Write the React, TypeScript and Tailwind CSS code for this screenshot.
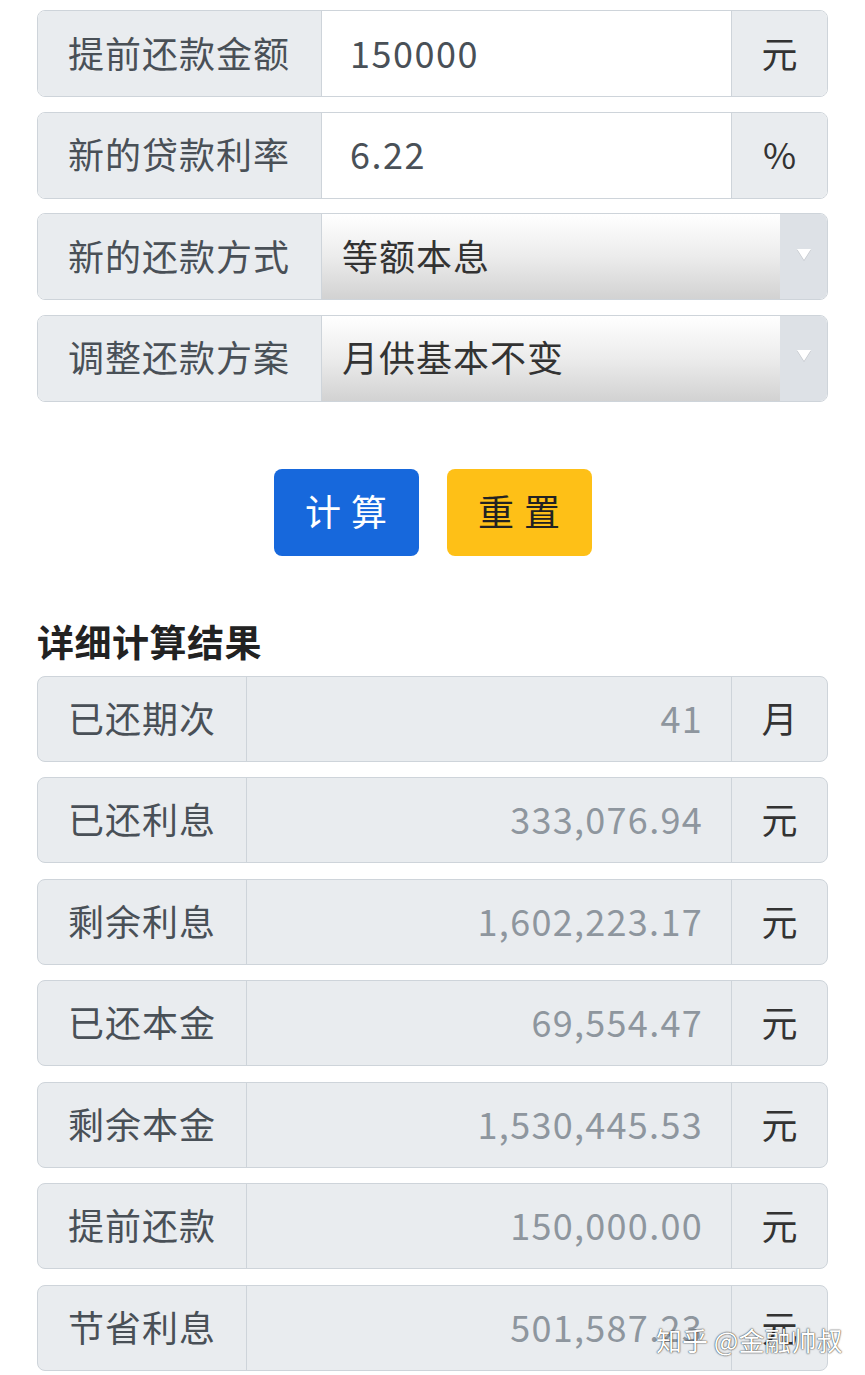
import React from "react";

const font = { fontFamily: '"Noto Sans CJK SC", "Noto Sans", sans-serif' };

function InputRow({ label, value, unit }: { label: string; value: string; unit: string }) {
  return (
    <div className="flex h-[87px] rounded-[8px] border border-[#ced4da] overflow-hidden">
      <div className="w-[284px] shrink-0 bg-[#e9ecef] border-r border-[#ced4da] flex items-center pl-[30px] pb-[4px] text-[36px] tracking-[1px] text-[#495057]">
        {label}
      </div>
      <div className="flex-1 bg-white flex items-center pl-[28px] pb-[4px] text-[36px] tracking-[1.5px] text-[#495057]">{value}</div>
      <div className="w-[96px] shrink-0 bg-[#e9ecef] border-l border-[#ced4da] flex items-center justify-center pb-[4px] text-[36px] text-[#333]">
        {unit}
      </div>
    </div>
  );
}

function SelectRow({ label, value }: { label: string; value: string }) {
  return (
    <div className="flex h-[87px] rounded-[8px] border border-[#ced4da] overflow-hidden">
      <div className="w-[284px] shrink-0 bg-[#e9ecef] border-r border-[#ced4da] flex items-center pl-[30px] pb-[4px] text-[36px] tracking-[1px] text-[#495057]">
        {label}
      </div>
      <div className="flex-1 bg-gradient-to-b from-white via-[#ececec] to-[#d2d2d2] flex items-center pl-[20px] pb-[4px] text-[36px] tracking-[1px] text-[#333]">
        {value}
      </div>
      <div className="w-[47px] shrink-0 bg-[#dde1e6] flex items-center justify-center pb-[4px]">
        <svg width="16" height="14" viewBox="0 0 16 14">
          <polygon points="1,2 15,2 8,13" fill="#bfc3c8" />
          <polygon points="1,1 15,1 8,12" fill="#ffffff" />
        </svg>
      </div>
    </div>
  );
}

function ResultRow({ label, value, unit }: { label: string; value: string; unit: string }) {
  return (
    <div className="flex h-[86px] rounded-[8px] border border-[#ced4da] overflow-hidden bg-[#e9ecef]">
      <div className="w-[209px] shrink-0 border-r border-[#ced4da] flex items-center pl-[30px] pb-[4px] text-[36px] tracking-[1px] text-[#495057]">
        {label}
      </div>
      <div className="flex-1 flex items-center justify-end pr-[28px] pb-[4px] text-[36px] tracking-[1.3px] text-[#8e969e]">{value}</div>
      <div className="w-[96px] shrink-0 border-l border-[#ced4da] flex items-center justify-center pb-[4px] text-[36px] text-[#333]">
        {unit}
      </div>
    </div>
  );
}

export default function App() {
  const results: [string, string, string][] = [
    ["已还期次", "41", "月"],
    ["已还利息", "333,076.94", "元"],
    ["剩余利息", "1,602,223.17", "元"],
    ["已还本金", "69,554.47", "元"],
    ["剩余本金", "1,530,445.53", "元"],
    ["提前还款", "150,000.00", "元"],
    ["节省利息", "501,587.23", "元"],
  ];
  return (
    <div style={font} className="relative w-[865px] h-[1375px] bg-white overflow-hidden">
      <div className="px-[37px] pt-[10px] flex flex-col">
        <div className="flex flex-col gap-[14.5px]">
          <InputRow label="提前还款金额" value="150000" unit="元" />
          <InputRow label="新的贷款利率" value="6.22" unit="%" />
          <SelectRow label="新的还款方式" value="等额本息" />
          <SelectRow label="调整还款方案" value="月供基本不变" />
        </div>
        <div className="flex justify-center gap-[28px] mt-[67px]">
          <button className="w-[145px] h-[87px] rounded-[8px] bg-[#1768dc] text-white text-[36px] tracking-[10px] pl-[10px] pb-[4px]">
            计算
          </button>
          <button className="w-[145px] h-[87px] rounded-[8px] bg-[#fec017] text-[#222] text-[36px] tracking-[10px] pl-[10px] pb-[4px]">
            重置
          </button>
        </div>
        <div className="mt-[58px] h-[62px] flex items-center pb-[6px] text-[37px] tracking-[0.5px] font-bold text-[#222] leading-none">
          详细计算结果
        </div>
        <div className="flex flex-col gap-[15.5px]">
          {results.map(([l, v, u]) => (
            <ResultRow key={l} label={l} value={v} unit={u} />
          ))}
        </div>
      </div>
      <div
        className="absolute left-[656px] top-[1320px] text-[26px] text-white whitespace-nowrap"
        style={{ textShadow: "0 0 2px rgba(0,0,0,0.6), 0 0 1px rgba(0,0,0,0.8)" }}
      >
        知乎 @金融帅叔
      </div>
    </div>
  );
}
